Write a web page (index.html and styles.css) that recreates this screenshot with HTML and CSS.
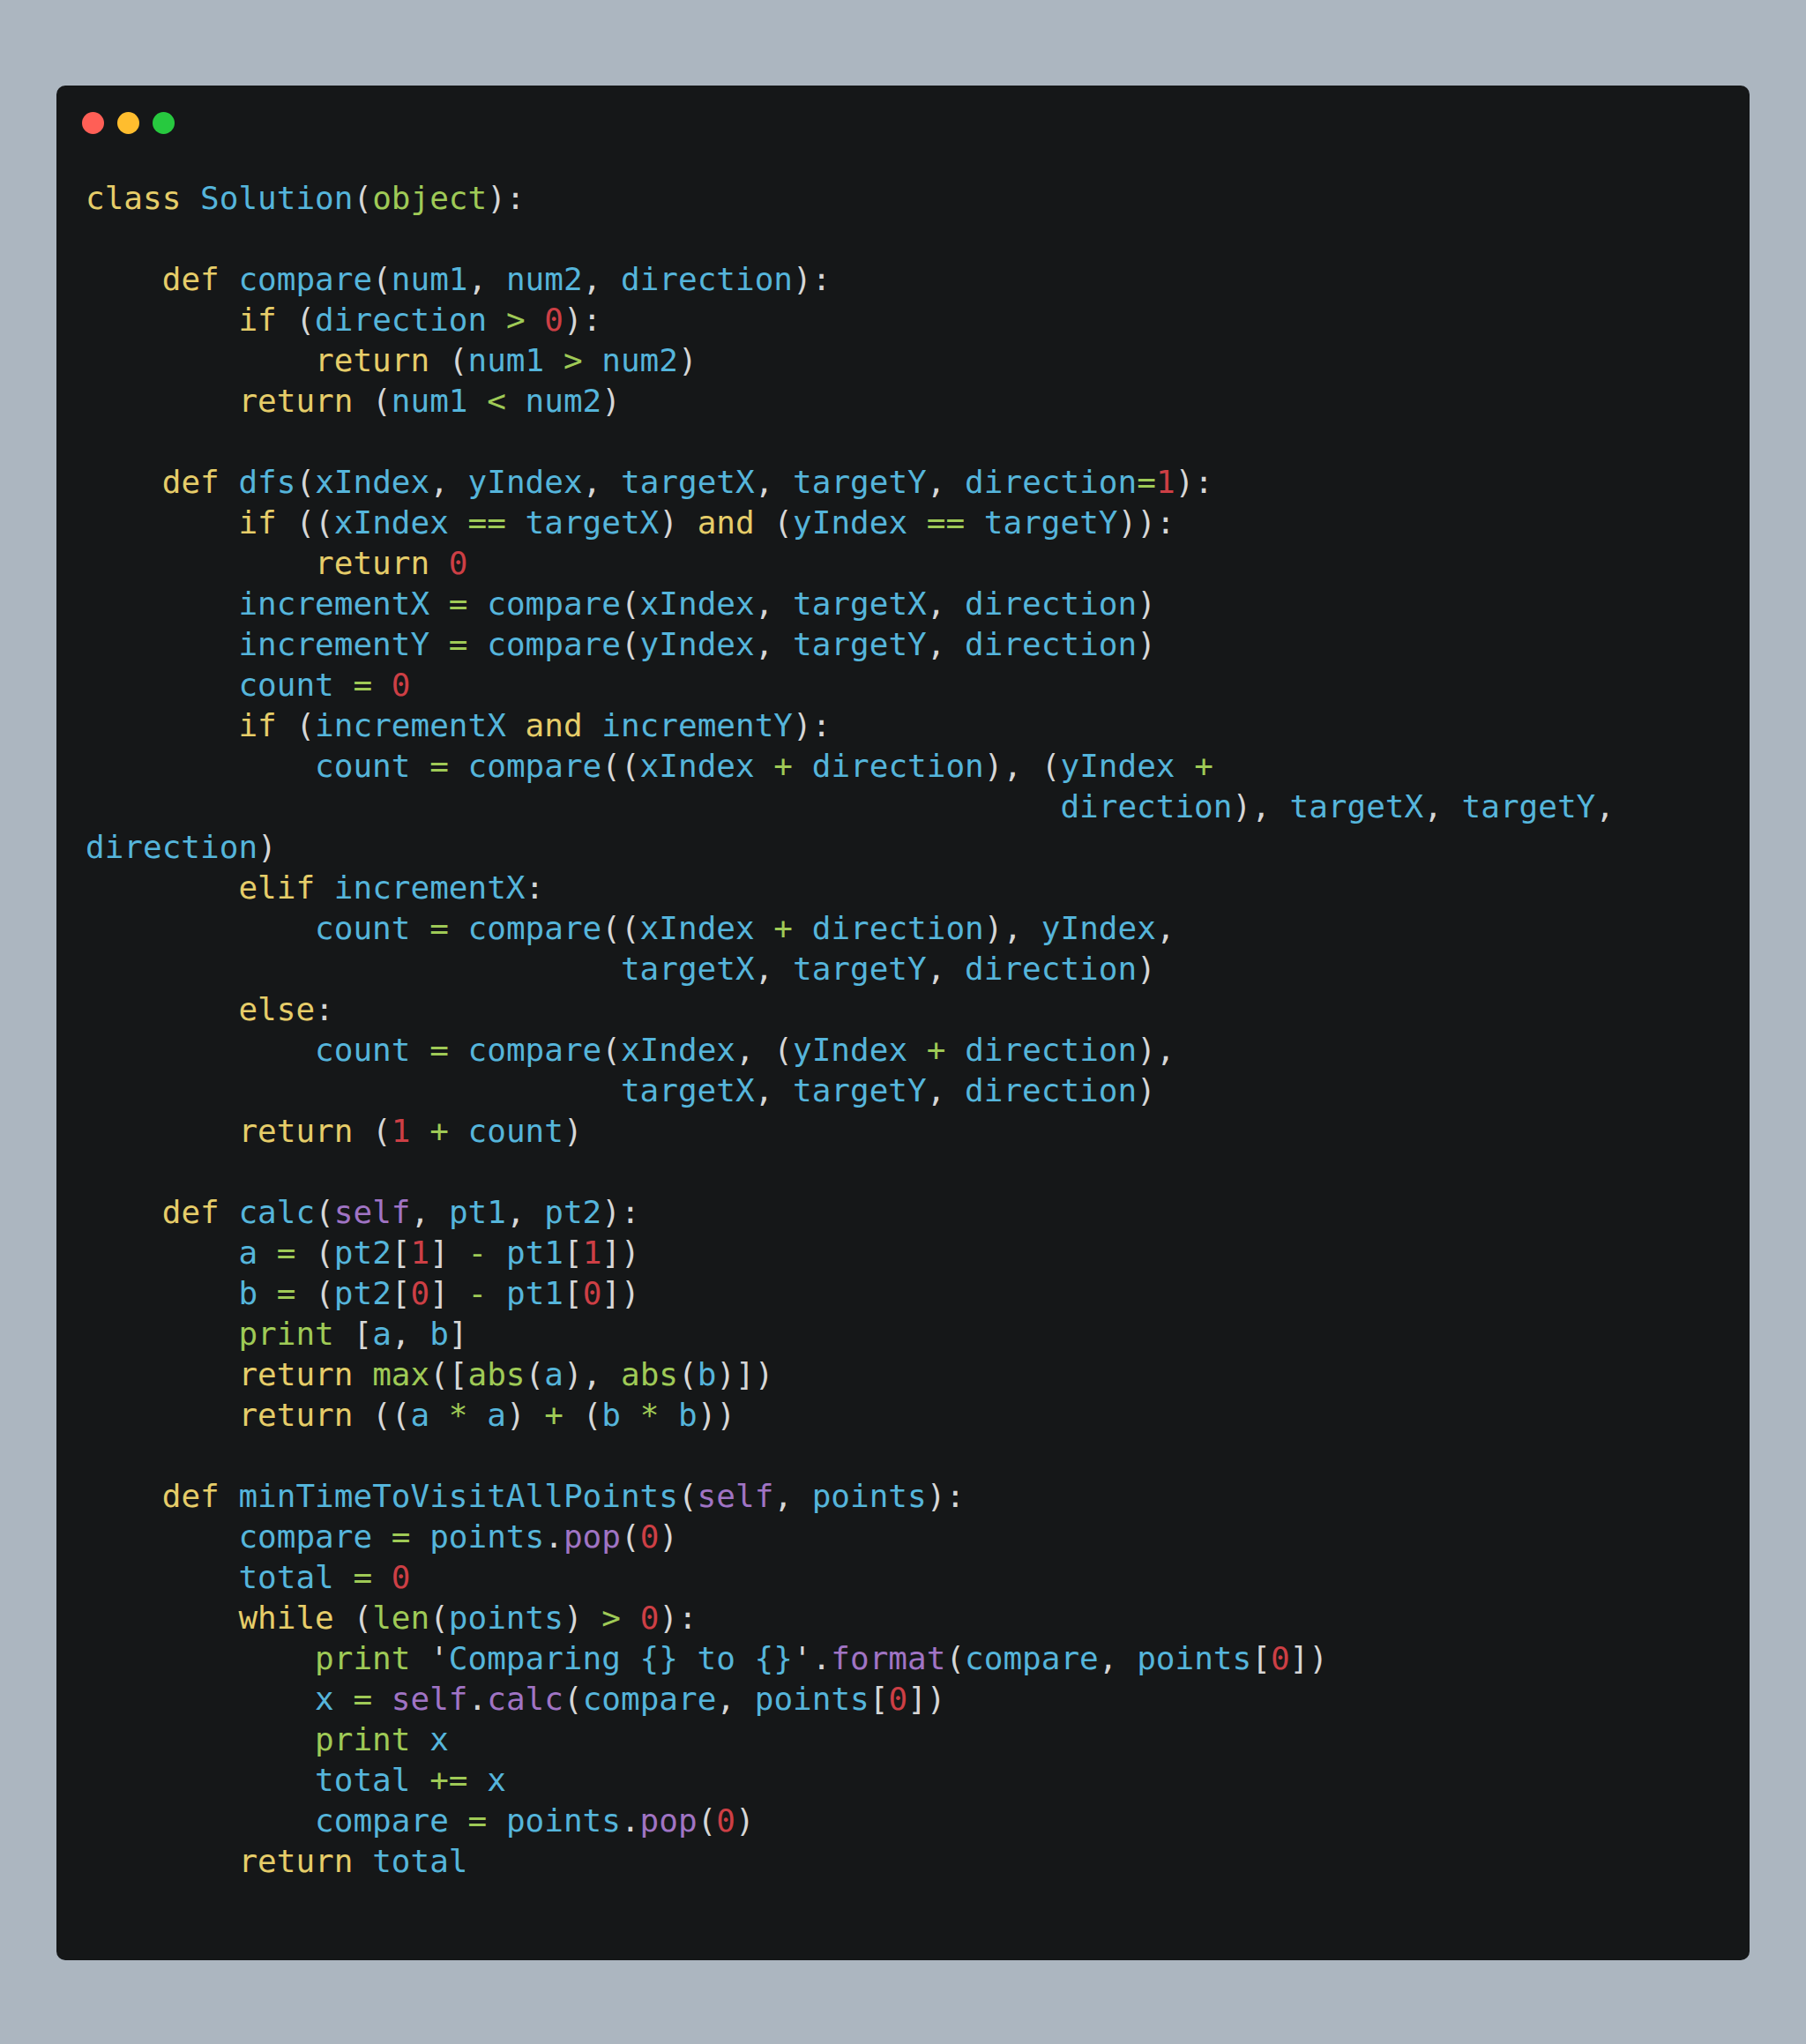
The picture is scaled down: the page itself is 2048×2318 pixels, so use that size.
FILE: index.html
```html
<!DOCTYPE html>
<html lang="en">
<head>
<meta charset="utf-8">
<title>Solution</title>
<link rel="stylesheet" href="styles.css">
</head>
<body>
<main class="window">
<div class="controls"><span class="dot red"></span><span class="dot amber"></span><span class="dot lime"></span></div>
<pre class="code"><span class="k">class</span> <span class="v">Solution</span>(<span class="g">object</span>):

    <span class="k">def</span> <span class="v">compare</span>(<span class="v">num1</span>, <span class="v">num2</span>, <span class="v">direction</span>):
        <span class="k">if</span> (<span class="v">direction</span> <span class="g">&gt;</span> <span class="n">0</span>):
            <span class="k">return</span> (<span class="v">num1</span> <span class="g">&gt;</span> <span class="v">num2</span>)
        <span class="k">return</span> (<span class="v">num1</span> <span class="g">&lt;</span> <span class="v">num2</span>)

    <span class="k">def</span> <span class="v">dfs</span>(<span class="v">xIndex</span>, <span class="v">yIndex</span>, <span class="v">targetX</span>, <span class="v">targetY</span>, <span class="v">direction</span><span class="g">=</span><span class="n">1</span>):
        <span class="k">if</span> ((<span class="v">xIndex</span> <span class="g">==</span> <span class="v">targetX</span>) <span class="k">and</span> (<span class="v">yIndex</span> <span class="g">==</span> <span class="v">targetY</span>)):
            <span class="k">return</span> <span class="n">0</span>
        <span class="v">incrementX</span> <span class="g">=</span> <span class="v">compare</span>(<span class="v">xIndex</span>, <span class="v">targetX</span>, <span class="v">direction</span>)
        <span class="v">incrementY</span> <span class="g">=</span> <span class="v">compare</span>(<span class="v">yIndex</span>, <span class="v">targetY</span>, <span class="v">direction</span>)
        <span class="v">count</span> <span class="g">=</span> <span class="n">0</span>
        <span class="k">if</span> (<span class="v">incrementX</span> <span class="k">and</span> <span class="v">incrementY</span>):
            <span class="v">count</span> <span class="g">=</span> <span class="v">compare</span>((<span class="v">xIndex</span> <span class="g">+</span> <span class="v">direction</span>), (<span class="v">yIndex</span> <span class="g">+</span>
                                                   <span class="v">direction</span>), <span class="v">targetX</span>, <span class="v">targetY</span>,
<span class="v">direction</span>)
        <span class="k">elif</span> <span class="v">incrementX</span>:
            <span class="v">count</span> <span class="g">=</span> <span class="v">compare</span>((<span class="v">xIndex</span> <span class="g">+</span> <span class="v">direction</span>), <span class="v">yIndex</span>,
                            <span class="v">targetX</span>, <span class="v">targetY</span>, <span class="v">direction</span>)
        <span class="k">else</span>:
            <span class="v">count</span> <span class="g">=</span> <span class="v">compare</span>(<span class="v">xIndex</span>, (<span class="v">yIndex</span> <span class="g">+</span> <span class="v">direction</span>),
                            <span class="v">targetX</span>, <span class="v">targetY</span>, <span class="v">direction</span>)
        <span class="k">return</span> (<span class="n">1</span> <span class="g">+</span> <span class="v">count</span>)

    <span class="k">def</span> <span class="v">calc</span>(<span class="p">self</span>, <span class="v">pt1</span>, <span class="v">pt2</span>):
        <span class="v">a</span> <span class="g">=</span> (<span class="v">pt2</span>[<span class="n">1</span>] <span class="g">-</span> <span class="v">pt1</span>[<span class="n">1</span>])
        <span class="v">b</span> <span class="g">=</span> (<span class="v">pt2</span>[<span class="n">0</span>] <span class="g">-</span> <span class="v">pt1</span>[<span class="n">0</span>])
        <span class="g">print</span> [<span class="v">a</span>, <span class="v">b</span>]
        <span class="k">return</span> <span class="g">max</span>([<span class="g">abs</span>(<span class="v">a</span>), <span class="g">abs</span>(<span class="v">b</span>)])
        <span class="k">return</span> ((<span class="v">a</span> <span class="g">*</span> <span class="v">a</span>) <span class="g">+</span> (<span class="v">b</span> <span class="g">*</span> <span class="v">b</span>))

    <span class="k">def</span> <span class="v">minTimeToVisitAllPoints</span>(<span class="p">self</span>, <span class="v">points</span>):
        <span class="v">compare</span> <span class="g">=</span> <span class="v">points</span>.<span class="p">pop</span>(<span class="n">0</span>)
        <span class="v">total</span> <span class="g">=</span> <span class="n">0</span>
        <span class="k">while</span> (<span class="g">len</span>(<span class="v">points</span>) <span class="g">&gt;</span> <span class="n">0</span>):
            <span class="g">print</span> '<span class="v">Comparing {} to {}</span>'.<span class="p">format</span>(<span class="v">compare</span>, <span class="v">points</span>[<span class="n">0</span>])
            <span class="v">x</span> <span class="g">=</span> <span class="p">self</span>.<span class="p">calc</span>(<span class="v">compare</span>, <span class="v">points</span>[<span class="n">0</span>])
            <span class="g">print</span> <span class="v">x</span>
            <span class="v">total</span> <span class="g">+=</span> <span class="v">x</span>
            <span class="v">compare</span> <span class="g">=</span> <span class="v">points</span>.<span class="p">pop</span>(<span class="n">0</span>)
        <span class="k">return</span> <span class="v">total</span>
</pre>
</main>
</body>
</html>
```
FILE: styles.css
```css
html, body {
  margin: 0;
  padding: 0;
}
body {
  background: #acb6c0;
  padding: 97px 64px 95px;
}
.window {
  background: #151718;
  border-radius: 10px;
  height: 2126px;
  box-sizing: border-box;
  padding: 29.5px 33px 0 29px;
}
.controls {
  display: flex;
  gap: 15px;
  margin-bottom: 50.5px;
}
.dot {
  width: 25px;
  height: 25px;
  border-radius: 50%;
}
.red { background: #ff5f56; }
.amber { background: #ffbd2e; }
.lime { background: #27c93f; }
.code {
  margin: 0;
  padding-left: 4px;
  font-family: "DejaVu Sans Mono", monospace;
  font-size: 36px;
  line-height: 46px;
  color: #d6d6d6;
}
.k { color: #e6cd69; }
.v { color: #55b5db; }
.g { color: #9fca56; }
.n { color: #cd3f45; }
.p { color: #a074c4; }
```
